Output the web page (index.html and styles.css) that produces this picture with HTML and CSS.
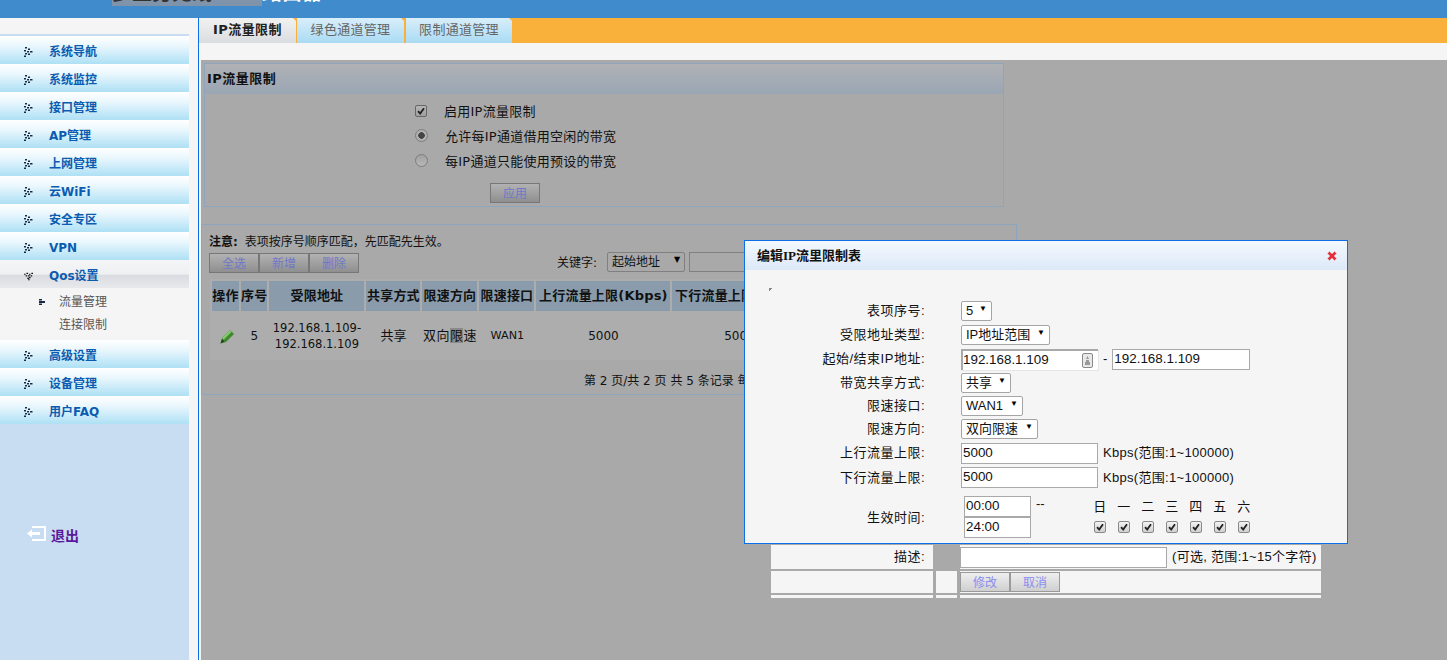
FILE: index.html
```html
<!DOCTYPE html>
<html lang="zh-CN">
<head>
<meta charset="utf-8">
<title>IP流量限制</title>
<link rel="stylesheet" href="styles.css">
</head>
<body>
<svg class="sprite" aria-hidden="true">
  <symbol id="tick" viewBox="0 0 12 12"><path d="M2.500 6.200 5 9 9.600 2.600" fill="none" stroke="currentColor" stroke-width="2.200"/></symbol>
  <symbol id="dots" viewBox="0 0 9 11"><path d="M1 0h2v1.500H1zM4 1.500h2V3H4zM0 3h2v1.500H0zM3 4h2v1.500H3zM6 4h2.500v1.500H6zM1 6h2v1.500H1zM4 6.500h2V8H4zM0 8.500h2V10H0z" fill="#1a2a44"/></symbol>
  <symbol id="dots-down" viewBox="0 0 11 9"><path d="M0 1h2v1.500H0zM3 0h2v1.500H3zM6 1h2v1.500H6zM9 0h2v1.500H9zM2 3h2v1.500H2zM5 3h2v1.500H5zM8 3h2v1.500H8zM4 6h2v1.500H4zM6 5h2v1.500H6zM5 8h2v1H5z" fill="#111"/></symbol>
</svg>

<header class="topbar">
  <div class="brand"><span class="brand-selected">多业务无线VPN</span><span>路由器</span></div>
</header>

<div class="layout">
  <nav class="sidebar">
    <ul class="menu">
      <li class="menu-item"><svg class="menu-icon"><use href="#dots"/></svg>系统导航</li>
      <li class="menu-item"><svg class="menu-icon"><use href="#dots"/></svg>系统监控</li>
      <li class="menu-item"><svg class="menu-icon"><use href="#dots"/></svg>接口管理</li>
      <li class="menu-item"><svg class="menu-icon"><use href="#dots"/></svg>AP管理</li>
      <li class="menu-item"><svg class="menu-icon"><use href="#dots"/></svg>上网管理</li>
      <li class="menu-item"><svg class="menu-icon"><use href="#dots"/></svg>云WiFi</li>
      <li class="menu-item"><svg class="menu-icon"><use href="#dots"/></svg>安全专区</li>
      <li class="menu-item"><svg class="menu-icon"><use href="#dots"/></svg>VPN</li>
      <li class="menu-item menu-item-open"><svg class="menu-icon"><use href="#dots-down"/></svg>Qos设置</li>
      <li class="submenu">
        <div class="submenu-item"><svg class="submenu-icon" viewBox="0 0 6 6"><path d="M0 0h3v1.500H0zM0 2h6v2H0zM0 4.500h3V6H0z" fill="#1a2a44"/></svg>流量管理</div>
        <div class="submenu-item">连接限制</div>
      </li>
      <li class="menu-item"><svg class="menu-icon"><use href="#dots"/></svg>高级设置</li>
      <li class="menu-item"><svg class="menu-icon"><use href="#dots"/></svg>设备管理</li>
      <li class="menu-item"><svg class="menu-icon"><use href="#dots"/></svg>用户FAQ</li>
    </ul>
    <div class="logout">
      <svg class="logout-icon" viewBox="0 0 19 15"><path d="M5 0h14v15H5v-2h12V2H5z" fill="#fff"/><path d="M0 7.500 5 3.500V6h8v3H5v2.500z" fill="#fff"/></svg>
      <span class="logout-text">退出</span>
    </div>
  </nav>

  <main class="main">
    <div class="tabs">
      <div class="tab tab-active">IP流量限制</div>
      <div class="tab tab-second">绿色通道管理</div>
      <div class="tab tab-third">限制通道管理</div>
    </div>
    <div class="strip"></div>

    <div class="content">
      <section class="panel panel-settings">
        <h2 class="panel-title">IP流量限制</h2>
        <div class="options">
          <label class="option option-first"><span class="check check-dim"><svg class="tick"><use href="#tick"/></svg></span><span>启用IP流量限制</span></label>
          <label class="option"><span class="radio radio-on"></span><span>允许每IP通道借用空闲的带宽</span></label>
          <label class="option"><span class="radio"></span><span>每IP通道只能使用预设的带宽</span></label>
          <button class="btn btn-dim btn-apply" type="button">应用</button>
        </div>
      </section>

      <section class="panel panel-list">
        <p class="notice"><b class="notice-lead">注意:</b> 表项按序号顺序匹配，先匹配先生效。</p>
        <div class="toolbar">
          <div class="btn-group">
            <button class="btn btn-dim" type="button">全选</button>
            <button class="btn btn-dim" type="button">新增</button>
            <button class="btn btn-dim" type="button">删除</button>
          </div>
          <div class="search">
            <span>关键字:</span>
            <span class="select select-dim select-key">起始地址<i class="caret">▼</i></span>
            <span class="search-input"></span>
          </div>
        </div>
        <table class="rules">
          <colgroup>
            <col class="c1"><col class="c2"><col class="c3"><col class="c4"><col class="c5"><col class="c5"><col class="c6"><col class="c6">
          </colgroup>
          <thead>
            <tr><th>操作</th><th>序号</th><th>受限地址</th><th>共享方式</th><th>限速方向</th><th>限速接口</th><th>上行流量上限(Kbps)</th><th>下行流量上限(Kbps)</th></tr>
          </thead>
          <tbody>
            <tr>
              <td><svg class="pencil" viewBox="0 0 15 15"><path d="M0.500 14.500 2 9 10 1l4 4-8 8z" fill="#3f8a2e"/><path d="M2 9 10 1l1.700 1.700L3.700 10.700z" fill="#86c86a"/><path d="M0.500 14.500 2 10l2.500 2.500z" fill="#23401c"/></svg></td>
              <td>5</td>
              <td class="cell-addr">192.168.1.109-<br>192.168.1.109</td>
              <td class="cell-cn">共享</td>
              <td class="cell-cn cell-dir">双向<span class="selected">限</span>速</td>
              <td class="cell-wan">WAN1</td>
              <td>5000</td>
              <td>5000</td>
            </tr>
          </tbody>
        </table>
        <p class="pager">第 2 页/共 2 页 共 5 条记录 每页显示 5 条</p>
      </section>
    </div>
  </main>
</div>

<div class="dialog">
  <div class="dialog-box">
    <div class="dialog-title">
      <span>编辑IP流里限制表</span>
      <svg class="dialog-close" viewBox="0 0 12 12"><path d="M1.500 3.500 3.500 1.500 6 4l2.500-2.500 2 2L8 6l2.500 2.500-2 2L6 8l-2.500 2.500-2-2L4 6z" fill="#e0303a" stroke="#f3a0a4" stroke-width=".7"/></svg>
    </div>
    <div class="dialog-mark"></div>
    <div class="form">
      <div class="row"><span class="row-label">表项序号:</span><span class="select select-seq">5<i class="caret">▼</i></span></div>
      <div class="row"><span class="row-label">受限地址类型:</span><span class="select select-type">IP地址范围<i class="caret">▼</i></span></div>
      <div class="row">
        <span class="row-label">起始/结束IP地址:</span>
        <span class="input input-start">192.168.1.109
          <svg class="input-key" viewBox="0 0 11 15"><rect x=".5" y=".5" width="10" height="14" rx="1.500" fill="#e8e8e8" stroke="#8a8a8a"/><path d="M5.500 3 7 6H4zM4 7h3v2h1v3H3V9h1z" fill="#9a9a9a"/></svg>
        </span>
        <span class="dash">-</span>
        <span class="input input-end">192.168.1.109</span>
      </div>
      <div class="row row-short"><span class="row-label">带宽共享方式:</span><span class="select select-share">共享<i class="caret">▼</i></span></div>
      <div class="row row-short"><span class="row-label">限速接口:</span><span class="select select-wan">WAN1<i class="caret">▼</i></span></div>
      <div class="row"><span class="row-label">限速方向:</span><span class="select select-dir">双向限速<i class="caret">▼</i></span></div>
      <div class="row"><span class="row-label">上行流量上限:</span><span class="input input-rate">5000</span><span class="hint">Kbps(范围:1~100000)</span></div>
      <div class="row row-tall"><span class="row-label">下行流量上限:</span><span class="input input-rate">5000</span><span class="hint">Kbps(范围:1~100000)</span></div>
      <div class="row row-time">
        <span class="row-label">生效时间:</span>
        <div class="times">
          <span class="input input-time">00:00</span>
          <span class="input input-time">24:00</span>
        </div>
        <span class="time-dash">--</span>
        <div class="days">
          <span>日</span><span>一</span><span>二</span><span>三</span><span>四</span><span>五</span><span>六</span>
          <span class="check"><svg class="tick"><use href="#tick"/></svg></span>
          <span class="check"><svg class="tick"><use href="#tick"/></svg></span>
          <span class="check"><svg class="tick"><use href="#tick"/></svg></span>
          <span class="check"><svg class="tick"><use href="#tick"/></svg></span>
          <span class="check"><svg class="tick"><use href="#tick"/></svg></span>
          <span class="check"><svg class="tick"><use href="#tick"/></svg></span>
          <span class="check"><svg class="tick"><use href="#tick"/></svg></span>
        </div>
      </div>
    </div>
  </div>
  <div class="spill">
    <div class="cell cell-label">描述:</div>
    <div class="cell-blank"></div>
    <div class="cell cell-field"><span class="input input-desc"></span><span class="hint">(可选, 范围:1~15个字符)</span></div>
    <div class="cell"></div>
    <div class="cell"></div>
    <div class="cell cell-field">
      <button class="btn btn-light" type="button">修改</button><button class="btn btn-light" type="button">取消</button>
    </div>
    <div class="cell"></div>
    <div class="cell"></div>
    <div class="cell"></div>
  </div>
</div>
</body>
</html>
```
FILE: styles.css
```css
* { box-sizing: border-box; }

html, body {
  margin: 0;
  height: 660px;
  overflow: hidden;
}

body {
  position: relative;
  background: #f5f5f5;
  color: #111;
  font: 13px/1.2 "DejaVu Sans", "Noto Sans CJK SC", sans-serif;
}

.sprite { display: none; }

/* top bar */
.topbar {
  height: 18px;
  overflow: hidden;
  padding-left: 112px;
  background: #408bcb;
}
.brand {
  margin-top: -21px;
  display: flex;
  height: 27px;
  line-height: 25px;
  font-size: 20px;
  font-weight: 700;
  color: #fff;
  font-family: "Noto Sans CJK SC", sans-serif;
}
.brand-selected {
  width: 150px;
  white-space: nowrap;
  overflow: hidden;
  background: #7f94ab;
  color: #333;
}

.layout {
  display: flex;
  height: 642px;
}

/* sidebar */
.sidebar {
  position: relative;
  flex: 0 0 189px;
  margin-top: 16px;
  border-top: 2px solid #c8ddf1;
  background: #c8ddf1;
}
.menu {
  list-style: none;
  margin: 0;
  padding: 0;
}
.menu-item {
  display: flex;
  align-items: center;
  height: 28px;
  padding: 4px 0 0 24px;
  background: linear-gradient(#ffffff 0%, #eaf7fd 35%, #aee0f5 100%);
  color: #0b5cb0;
  font-size: 12px;
  font-weight: 700;
}
.menu-item-open {
  background: linear-gradient(#f4f5f6 0%, #eff0f2 50%, #d9dce1 55%, #e8e9ec 100%);
}
.menu-icon {
  width: 9px;
  height: 11px;
  margin-right: 16px;
  flex: none;
}
.submenu {
  height: 52px;
  padding-top: 3px;
  background: #f5f5f5;
  color: #555;
  font-size: 12px;
}
.submenu-item {
  position: relative;
  height: 23px;
  padding-left: 59px;
  line-height: 23px;
}
.submenu-icon {
  position: absolute;
  left: 39px;
  top: 8px;
  width: 6px;
  height: 6px;
}
.logout {
  position: absolute;
  left: 27px;
  top: 490px;
  display: flex;
  align-items: flex-start;
  gap: 5px;
  color: #5a189a;
  font-size: 14px;
  font-weight: 700;
}
.logout-icon {
  width: 19px;
  height: 15px;
}
.logout-text { margin-top: 2px; }

/* main */
.main {
  flex: 1;
  margin-left: 9px;
  border-left: 1px solid #0d6fe8;
  display: flex;
  flex-direction: column;
  min-width: 0;
}
.tabs {
  display: flex;
  height: 25px;
  background: #f9b13c;
}
.tab {
  position: relative;
  height: 25px;
  text-align: center;
  line-height: 24px;
  font-size: 13px;
  color: #666;
  letter-spacing: .3px;
  background: linear-gradient(#d9eefa, #a9dbf3);
}
.tab::before {
  content: "";
  position: absolute;
  right: -3px;
  top: 0;
  border: 3px solid transparent;
  border-top-color: #f9b13c;
}
.tab-active {
  width: 97px;
  margin-right: 1px;
  color: #222;
  font-weight: 700;
  letter-spacing: .4px;
  background: linear-gradient(#f1f1f1, #dadde0);
}
.tab-second { width: 107px; margin-right: 2px; }
.tab-third { width: 106px; }

.strip {
  height: 17px;
  background: #f5f5f5;
}

.content {
  flex: 1;
  margin-left: 2px;
  padding-top: 3px;
  background: #a9a9a9;
}

.panel {
  border: 1px solid #8ea6bd;
}
.panel-settings {
  width: 800px;
  height: 144px;
  margin: 0 0 17px 3px;
}
.panel-title {
  margin: 0;
  height: 30px;
  padding-left: 2px;
  line-height: 30px;
  font-size: 13px;
  letter-spacing: .5px;
  font-weight: 700;
  background: linear-gradient(#b0b1b5, #9aa6b4);
}
.options {
  display: flex;
  flex-direction: column;
  align-items: flex-start;
  padding-left: 210px;
}
.option {
  display: flex;
  align-items: center;
  height: 25px;
  gap: 17px;
  font-size: 13px;
  letter-spacing: .25px;
}
.option-first { margin-top: 5px; }
.check {
  display: inline-flex;
  align-items: center;
  justify-content: center;
  width: 12px;
  height: 12px;
  border: 1px solid #8a8a8a;
  border-radius: 2px;
  background: linear-gradient(#f2f2f2, #d0d0d0);
  color: #222;
}
.check-dim {
  background: linear-gradient(#b5b5b5, #a0a0a0);
  border-color: #666;
  margin-bottom: 2px;
}
.tick {
  width: 10px;
  height: 10px;
}
.radio {
  width: 13px;
  height: 13px;
  margin-bottom: 2px;
  border: 1px solid #7d7d7d;
  border-radius: 50%;
  background: linear-gradient(#a0a0a0, #b8b8b8);
}
.radio-on {
  background: radial-gradient(circle, #444 0 3px, #b0b0b0 3.500px);
}

.btn {
  width: 50px;
  height: 20px;
  padding: 0;
  border: 1px solid #777;
  font: 12px/18px "Noto Sans CJK SC", sans-serif;
  color: #6f78c8;
}
.btn-dim {
  background: linear-gradient(#b2b2b2, #8f8f8f);
}
.btn-apply {
  margin: 9px 0 0 75px;
}
.btn-light {
  background: linear-gradient(#efefef, #cfcfcf);
  border-color: #9a9a9a;
  color: #8c8cf0;
}

.panel-list {
  width: 816px;
  height: 171px;
  padding: 8px 0 0 7px;
}
.notice {
  margin: 0;
  height: 20px;
  line-height: 18px;
  font-size: 12px;
}
.notice-lead { margin-right: 3px; }
.toolbar {
  display: flex;
  justify-content: space-between;
  align-items: flex-start;
  height: 26px;
}
.btn-group { display: flex; }
.search {
  display: flex;
  align-items: flex-start;
  font-size: 12px;
  line-height: 20px;
  margin: -1px 119px 0 auto;
  width: 340px;
  gap: 10px;
}
.search > span:first-child { margin-top: 1px; }

.select {
  position: relative;
  display: inline-block;
  height: 20px;
  padding-left: 4px;
  border: 1px solid #a5a5a5;
  border-radius: 2px;
  background: #fff;
  font-size: 13px;
  line-height: 18px;
  white-space: nowrap;
}
.select-dim {
  background: #a9a9a9;
  border-color: #808080;
  font-size: 12px;
}
.select-key { width: 78px; }
.search-input {
  width: 120px;
  height: 20px;
  margin-left: -6px;
  border: 1px solid #808080;
}
.caret {
  position: absolute;
  right: 4px;
  top: 0;
  font-style: normal;
  font-size: 8px;
  line-height: 14px;
  color: #000;
}

.rules {
  width: auto;
  table-layout: fixed;
  border-collapse: separate;
  border-spacing: 2px;
  margin-left: 1px;
  background: #adadad;
  font-size: 12px;
}
.c1 { width: 27px; }
.c2 { width: 26px; }
.c3 { width: 95px; }
.c4 { width: 54px; }
.c5 { width: 55px; }
.c6 { width: 134px; }
.rules th {
  height: 30px;
  padding: 0;
  background: #8a9cab;
  font-size: 13px;
  letter-spacing: .2px;
  white-space: nowrap;
  text-align: center;
  overflow: hidden;
}
.rules td {
  height: 45px;
  padding: 0;
  text-align: center;
  line-height: 16px;
  white-space: nowrap;
}
.rules .cell-addr { font-size: 11.5px; }
.rules .cell-cn { font-size: 13px; }
.rules .cell-dir { letter-spacing: .5px; }
.rules .cell-wan { font-size: 11.2px; padding-left: 1px; }
.selected { background: #8a8a8a; }
.pencil {
  width: 15px;
  height: 15px;
  margin-left: 3px;
  vertical-align: middle;
}
.pager {
  margin: 0;
  padding: 12px 0 0 375px;
  font-size: 12px;
  line-height: 18px;
  white-space: nowrap;
}

/* dialog */
.dialog {
  position: absolute;
  left: 744px;
  top: 240px;
  width: 604px;
  font-family: "Liberation Sans", "Noto Sans CJK SC", sans-serif;
  font-size: 13px;
}
.dialog-box {
  height: 304px;
  border: 1px solid #0d6fe8;
  background: #f5f5f5;
}
.dialog-title {
  display: flex;
  align-items: center;
  justify-content: space-between;
  height: 29px;
  padding: 0 9px 0 12px;
  font-family: "Liberation Serif", "Noto Sans CJK SC", serif;
  font-weight: 700;
  font-size: 13px;
  color: #111;
  background: linear-gradient(#f3f8fe, #dde9f8);
}
.dialog-close {
  width: 12px;
  height: 12px;
}
.dialog-mark {
  width: 4px;
  height: 4px;
  margin: 18px 0 0 24px;
  background: linear-gradient(135deg, #888 50%, transparent 50%);
}
.form {
  display: flex;
  flex-direction: column;
  margin-top: 7px;
}
.row {
  display: flex;
  align-items: center;
  height: 24px;
}
.row-short { height: 23px; }
.row-tall { height: 25px; }
.row-label {
  flex: 0 0 180px;
  margin-right: 36px;
  letter-spacing: .5px;
  text-align: right;
  white-space: nowrap;
}
.input {
  display: inline-flex;
  align-items: center;
  height: 21px;
  padding-left: 1px;
  border: 1px solid #a9a9a9;
  background: #fff;
  font-size: 13.4px;
  white-space: nowrap;
}
.input-start {
  position: relative;
  width: 137px;
  padding-left: 0;
  border-width: 2px 0 0 2px;
  border-color: #a9a9a9;
  box-shadow: 1px 1px 0 #e6e6e6;
}
.input-key {
  position: absolute;
  right: 5px;
  top: 2px;
  width: 11px;
  height: 15px;
}
.input-end { width: 138px; }
.dash { margin: 0 5px; }
.input-rate { width: 137px; }
.hint {
  margin-left: 5px;
  letter-spacing: .3px;
  white-space: nowrap;
}
.select-seq { width: 31px; }
.select-type { width: 89px; }
.select-share { width: 50px; }
.select-wan { width: 62px; }
.select-dir { width: 77px; }

.row-time {
  height: 55px;
  align-items: center;
}
.row-time .row-label { margin-right: 39px; }
.times {
  display: flex;
  flex-direction: column;
  margin-top: -2px;
}
.input-time {
  width: 67px;
  height: 21px;
}
.time-dash {
  align-self: flex-start;
  margin: 6px 0 0 5px;
}
.days {
  display: grid;
  grid-template-columns: repeat(7, 24px);
  grid-auto-rows: 20px;
  justify-items: center;
  align-items: center;
  margin: -2px 0 0 43px;
}

.spill {
  display: grid;
  grid-template-columns: 162px 21px 361px;
  grid-template-rows: 24px 22px 3px;
  column-gap: 3px;
  row-gap: 2px;
  width: 550px;
  margin: 1px 0 0 27px;
}
.cell { background: #f5f5f5; }
.cell-blank { background: #a9a9a9; }
.cell-label {
  padding-right: 8px;
  letter-spacing: .5px;
  text-align: right;
  line-height: 24px;
}
.cell-field {
  display: flex;
  align-items: center;
}
.input-desc { width: 207px; }
```
